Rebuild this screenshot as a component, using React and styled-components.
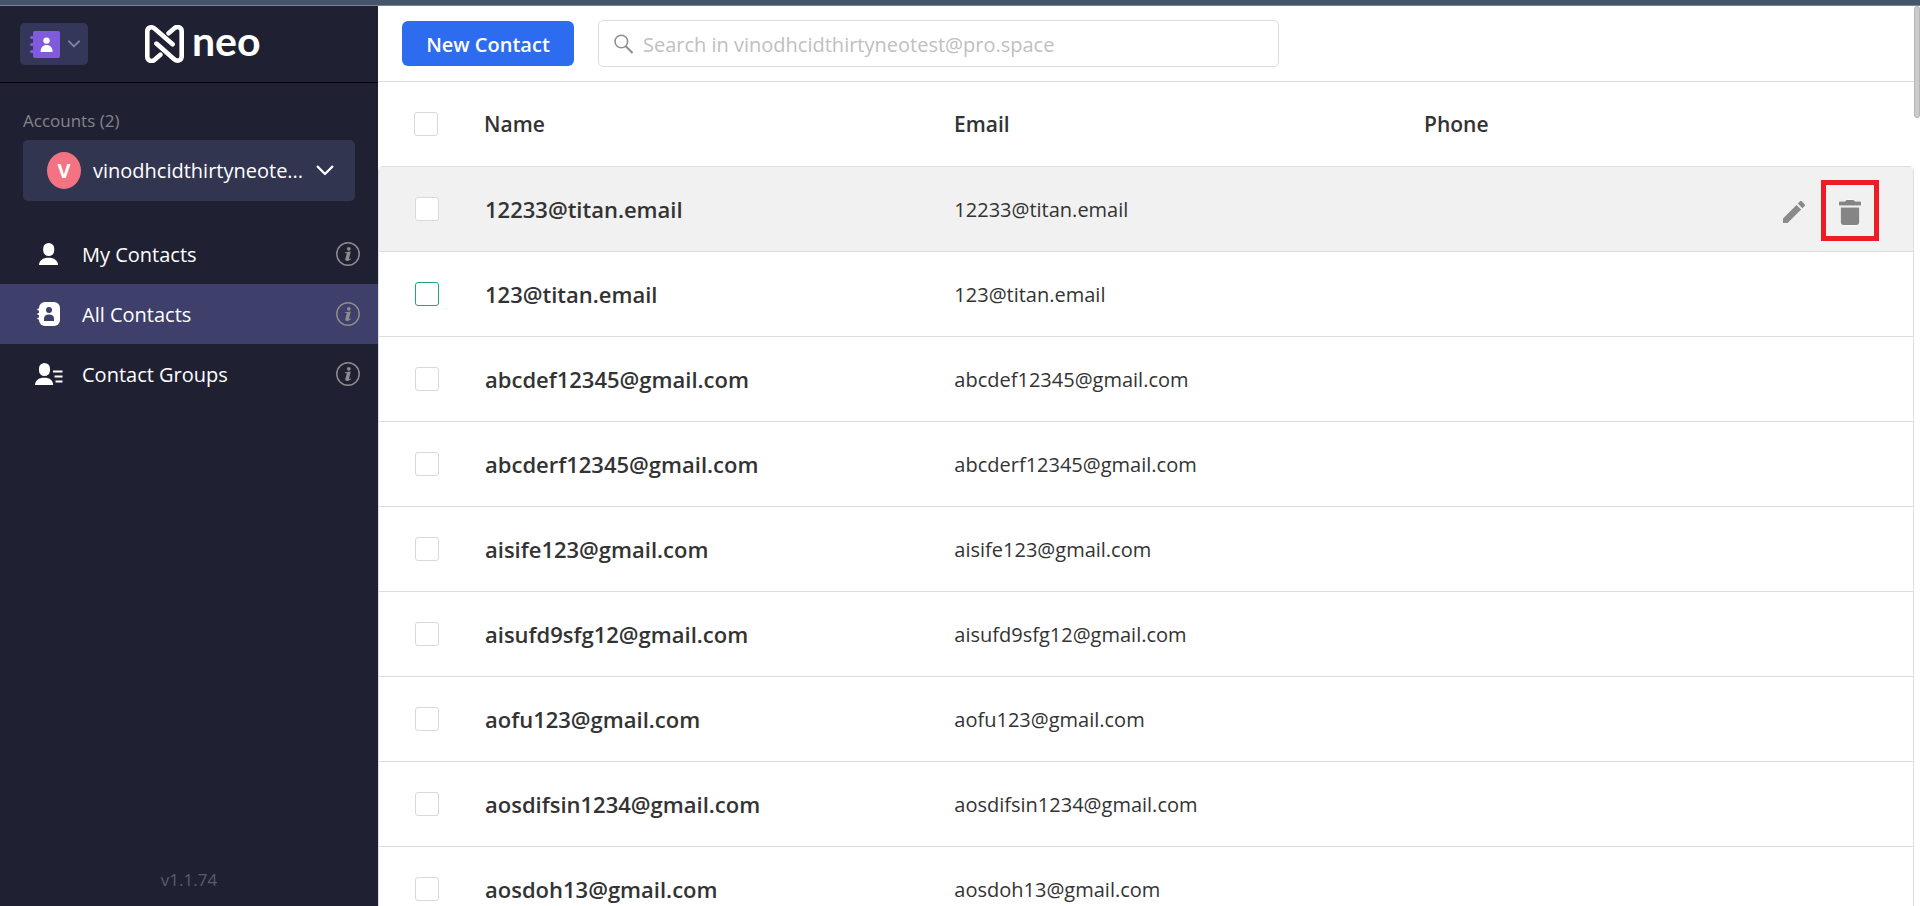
import { useState } from 'react';
import styled, { createGlobalStyle } from 'styled-components';

const GlobalStyle = createGlobalStyle`
  * {
    box-sizing: border-box;
  }

  body {
    margin: 0;
    background: #ffffff;
    color: #333333;
    font-family: "Segoe UI", "Open Sans", "Noto Sans", sans-serif;
    font-size: 20px;
  }

  button,
  input {
    font-family: inherit;
  }

  svg {
    display: block;
    flex: none;
  }
`;

const Page = styled.div`
  display: flex;
  flex-direction: column;
  height: 100vh;
  overflow: hidden;
`;

const TopStrip = styled.div`
  flex: none;
  height: 6px;
  background: #44546a;
  border-bottom: 1px solid #76839a;
`;

const Layout = styled.div`
  display: flex;
  flex: 1;
  min-height: 0;
`;

const Sidebar = styled.aside`
  display: flex;
  flex-direction: column;
  flex: none;
  width: 378px;
  background: #1f2133;
  color: #ffffff;
`;

const SidebarHeader = styled.div`
  display: flex;
  align-items: center;
  gap: 57px;
  height: 77px;
  padding: 0 20px;
  border-bottom: 1px solid #000000;
`;

const AppSwitcher = styled.button`
  display: flex;
  align-items: center;
  gap: 8px;
  width: 68px;
  height: 42px;
  padding: 0 0 0 10px;
  border: none;
  border-radius: 5px;
  background: #34375a;
  cursor: pointer;
`;

const Logo = styled.a`
  display: flex;
  align-items: center;
  gap: 8px;
  height: 40px;
  color: #ffffff;
  font-family: Lato, sans-serif;
  font-size: 41px;
  font-weight: 700;
  line-height: 32px;
  text-decoration: none;
`;

const LogoText = styled.span`
  padding-bottom: 6px;
`;

const AccountsLabel = styled.div`
  padding: 26px 23px 7px;
  color: #84858a;
  font-size: 17px;
  line-height: 24px;
`;

const AccountPicker = styled.button`
  display: flex;
  align-items: center;
  justify-content: space-between;
  gap: 12px;
  height: 61px;
  margin: 0 23px 23px;
  padding: 0 21px 0 24px;
  border: none;
  border-radius: 5px;
  background: #31354f;
  color: #ffffff;
  font-size: 20px;
  cursor: pointer;
`;

const Avatar = styled.span`
  flex: none;
  width: 34px;
  height: 37px;
  border-radius: 50%;
  background: #f47383;
  font-size: 20px;
  font-weight: 700;
  line-height: 37px;
  text-align: center;
`;

const AccountName = styled.span`
  flex: 1;
  line-height: 28px;
  text-align: left;
  white-space: nowrap;
`;

const NavItem = styled.div`
  display: flex;
  align-items: center;
  height: 60px;
  padding-right: 18px;
  background: ${(props) => (props.$active ? '#3e3f6b' : 'transparent')};
`;

const NavLink = styled.a`
  display: flex;
  align-items: center;
  flex: 1;
  height: 60px;
  color: #ffffff;
  font-size: 20px;
  text-decoration: none;
`;

const NavIcon = styled.span`
  display: flex;
  width: 82px;
  padding-left: 34px;
`;

const InfoButton = styled.button`
  padding: 0;
  border: none;
  background: none;
  cursor: pointer;
`;

const Version = styled.div`
  margin-top: auto;
  padding-bottom: 14px;
  color: #5a5c66;
  font-size: 17px;
  line-height: 24px;
  text-align: center;
`;

const Main = styled.main`
  flex: 1;
  min-width: 0;
`;

const Toolbar = styled.div`
  display: flex;
  align-items: center;
  gap: 24px;
  height: 76px;
  padding: 0 24px;
  border-bottom: 1px solid #dddddd;
`;

const NewContactButton = styled.button`
  flex: none;
  width: 172px;
  height: 45px;
  padding: 2px 0 0;
  border: none;
  border-radius: 6px;
  background: #2d6cee;
  color: #ffffff;
  font-size: 20px;
  font-weight: 600;
  cursor: pointer;
`;

const SearchBox = styled.label`
  display: flex;
  align-items: center;
  gap: 10px;
  flex: 0 1 681px;
  height: 47px;
  padding: 0 15px;
  border: 1px solid #dddddd;
  border-radius: 5px;
`;

const SearchInput = styled.input`
  flex: 1;
  min-width: 0;
  padding: 2px 0 0;
  border: none;
  outline: none;
  background: none;
  color: #333333;
  font-size: 20px;

  &::placeholder {
    color: #c0c0c0;
    opacity: 1;
  }
`;

const Table = styled.table`
  display: block;
`;

const TableHead = styled.thead`
  display: block;
`;

const TableBody = styled.tbody`
  display: block;
  border: 1px solid #dddddd;
  border-radius: 5px 5px 0 0;
`;

const Row = styled.tr`
  display: grid;
  grid-template-columns: 106px 1fr 1fr 1fr;
  align-items: center;
  height: ${(props) => (props.$head ? '84px' : '85px')};
  padding-right: 20px;
  border-bottom: ${(props) => (props.$head ? 'none' : '1px solid #dddddd')};
  background: ${(props) => (props.$hovered ? '#f1f1f1' : 'transparent')};
`;

const HeadCell = styled.th`
  padding: 0;
  font-size: 21px;
  font-weight: 600;
  line-height: 30px;
  text-align: left;
`;

const CheckCell = styled.td`
  display: flex;
  padding: 0 0 0 36px;
`;

const NameCell = styled.td`
  padding: 0;
  font-size: 22px;
  font-weight: 600;
  line-height: 30px;
`;

const Cell = styled.td`
  padding: 2px 0 0;
  font-size: 20px;
  line-height: 30px;
`;

const PhoneCell = styled.td`
  display: flex;
  align-items: center;
  justify-content: flex-end;
  gap: 4px;
  padding: 2px 14px 0 0;
`;

const Checkbox = styled.input`
  appearance: none;
  width: 24px;
  height: 24px;
  margin: 0;
  border: 1px solid ${(props) => (props.$focused ? '#1fa67a' : '#d9d9d9')};
  border-radius: 3px;
  background: #ffffff;
  cursor: pointer;

  &:checked {
    background: #1fa67a;
  }
`;

const IconButton = styled.button`
  display: flex;
  padding: 4px 12px 0;
  border: none;
  background: none;
  cursor: pointer;
`;

const DeleteButton = styled(IconButton)`
  align-items: center;
  justify-content: center;
  width: 58px;
  height: 61px;
  padding: 4px 0 0;
  border: 5px solid #ee1c25;
`;

const Scrollbar = styled.div`
  flex: none;
  width: 6px;
`;

const ScrollThumb = styled.div`
  height: 112px;
  border: 1px solid #b5b5b5;
  border-radius: 3px;
  background: #cccccc;
`;

const AddressBookIcon = () => (
  <svg width="30" height="27" viewBox="0 0 30 27">
    <rect x="3" width="27" height="27" rx="2" fill="#805bdb" />
    <path d="M1.5 6.5H6M1.5 13.5H6M1.5 20.5H6" stroke="#805bdb" strokeWidth="3" strokeLinecap="round" />
    <circle cx="16.5" cy="9.6" r="3.2" fill="#ffffff" />
    <path d="M10.6 21c0-4.600 2.500-7 5.900-7s6.100 2.400 6.100 7z" fill="#ffffff" />
  </svg>
);

const Chevron = ({ width, height, color, thickness }) => (
  <svg width={width} height={height} viewBox="0 0 16 10">
    <path d="M1.300 1.500 8 8.200l6.700-6.700" fill="none" stroke={color} strokeWidth={thickness} strokeLinecap="round" strokeLinejoin="round" />
  </svg>
);

const NeoMark = () => (
  <svg width="39" height="38" viewBox="0 0 39 38" fill="none" stroke="#ffffff" strokeWidth="4.600" strokeLinecap="round" strokeLinejoin="round">
    <path d="M27.600 19.200 9.800 3.700C6.600 1 2.300 2.300 2.300 6.600v25c0 4 4.200 5.700 7.300 3.100l5.800-5" />
    <path d="M11.400 18.600l17.800 15.600c3.200 2.700 7.500 1.400 7.500-2.900v-25c0-4-4.200-5.700-7.300-3.100l-5.800 5" />
  </svg>
);

const PersonIcon = () => (
  <svg width="28" height="26" viewBox="0 0 28 26" fill="#ffffff">
    <rect x="9.200" y="2" width="11" height="13" rx="5.500" />
    <path d="M5 24c.2-4.500 3.800-7.200 9.500-7.200S23.800 19.500 24 24z" />
  </svg>
);

const ContactBookIcon = () => (
  <svg width="28" height="26" viewBox="0 0 28 26">
    <rect x="5" y="1" width="21" height="24" rx="6" fill="#ffffff" />
    <path d="M4.300 8.500H8M4.300 13H8M4.300 17.500H8" stroke="#ffffff" strokeWidth="2" strokeLinecap="round" />
    <circle cx="15" cy="9" r="3" fill="#3e3f6b" />
    <path d="M10 19.500v-2c0-2.600 2-4 5-4s5 1.400 5 4v2q0 .5-.5.500h-9q-.5 0-.5-.5z" fill="#3e3f6b" />
  </svg>
);

const GroupIcon = () => (
  <svg width="30" height="26" viewBox="0 0 30 26" fill="#ffffff">
    <rect x="5" y="2" width="11" height="13" rx="5.500" />
    <path d="M1 24c.2-4.500 3.600-7.200 9.300-7.200S19 19.500 19.200 24z" />
    <path d="M19 10.500h9.500M20.500 15.500h8M21.500 20.500h7" stroke="#ffffff" strokeWidth="1.800" />
  </svg>
);

const InfoIcon = () => (
  <svg width="24" height="24" viewBox="0 0 24 24" fill="#8c8c8c">
    <circle cx="12" cy="12" r="11.200" fill="none" stroke="#8c8c8c" strokeWidth="1.500" />
    <circle cx="12.800" cy="6.800" r="1.900" />
    <path d="M9 10.200 14.800 9.600 13 16.600c-.1.600.5.600 1.700-.4l.3.700c-1.500 1.500-2.800 2-4 2-1.400 0-2-.8-1.700-2l1.400-5.100c.1-.6-.4-.7-1.700-.7z" />
  </svg>
);

const SearchIcon = () => (
  <svg width="19" height="20" viewBox="0 0 19 20" fill="none" stroke="#8f8f8f" strokeWidth="1.600">
    <circle cx="7.300" cy="7.500" r="6.300" />
    <path d="M11.800 12.200 18.500 19" strokeWidth="2" />
  </svg>
);

const PencilIcon = () => (
  <svg width="22" height="22" viewBox="3 3 18 18" fill="#8a8a8a">
    <path d="M3 17.250V21h3.750L17.810 9.940l-3.750-3.750L3 17.250zM20.710 7.040c.39-.39.39-1.020 0-1.410l-2.340-2.340c-.39-.39-1.020-.39-1.410 0l-1.830 1.830 3.750 3.750 1.830-1.830z" />
  </svg>
);

const TrashIcon = () => (
  <svg width="24" height="27" viewBox="0 0 24 27" fill="#858585" stroke="#ffffff" strokeWidth="1" paintOrder="stroke">
    <path d="M1 3.200Q1 2.500 1.700 2.500H7L8.500 1h7L17 2.500h5.300Q23 2.500 23 3.200V6.500H1z" />
    <path d="M2.800 8.500h18.400V23q0 3-3 3H5.800q-3 0-3-3z" />
  </svg>
);

const navItems = [
  { label: 'My Contacts', icon: <PersonIcon /> },
  { label: 'All Contacts', icon: <ContactBookIcon /> },
  { label: 'Contact Groups', icon: <GroupIcon /> },
];

const contacts = [
  '12233@titan.email',
  '123@titan.email',
  'abcdef12345@gmail.com',
  'abcderf12345@gmail.com',
  'aisife123@gmail.com',
  'aisufd9sfg12@gmail.com',
  'aofu123@gmail.com',
  'aosdifsin1234@gmail.com',
  'aosdoh13@gmail.com',
];

const account = 'vinodhcidthirtyneotest@pro.space';

const shorten = (text, max) => (text.length > max ? `${text.slice(0, max)}...` : text);

function App() {
  const [active, setActive] = useState('All Contacts');
  const [query, setQuery] = useState('');

  return (
    <Page>
      <GlobalStyle />
      <TopStrip />
      <Layout>
        <Sidebar>
          <SidebarHeader>
            <AppSwitcher type="button" aria-label="Switch app">
              <AddressBookIcon />
              <Chevron width={12} height={8} color="#8082ac" thickness={2.6} />
            </AppSwitcher>
            <Logo href="#home">
              <NeoMark />
              <LogoText>neo</LogoText>
            </Logo>
          </SidebarHeader>
          <AccountsLabel>Accounts (2)</AccountsLabel>
          <AccountPicker type="button">
            <Avatar>V</Avatar>
            <AccountName>{shorten(account, 20)}</AccountName>
            <Chevron width={18} height={11} color="#ffffff" thickness={2} />
          </AccountPicker>
          <nav>
            {navItems.map((item) => (
              <NavItem key={item.label} $active={item.label === active}>
                <NavLink href="#contacts" onClick={() => setActive(item.label)}>
                  <NavIcon>{item.icon}</NavIcon>
                  {item.label}
                </NavLink>
                <InfoButton type="button" aria-label={`About ${item.label}`}>
                  <InfoIcon />
                </InfoButton>
              </NavItem>
            ))}
          </nav>
          <Version>v1.1.74</Version>
        </Sidebar>
        <Main>
          <Toolbar>
            <NewContactButton type="button">New Contact</NewContactButton>
            <SearchBox>
              <SearchIcon />
              <SearchInput
                type="text"
                aria-label="Search contacts"
                placeholder={`Search in ${account}`}
                value={query}
                onChange={(e) => setQuery(e.target.value)}
              />
            </SearchBox>
          </Toolbar>
          <Table>
            <TableHead>
              <Row $head>
                <CheckCell>
                  <Checkbox type="checkbox" aria-label="Select all contacts" />
                </CheckCell>
                <HeadCell>Name</HeadCell>
                <HeadCell>Email</HeadCell>
                <HeadCell>Phone</HeadCell>
              </Row>
            </TableHead>
            <TableBody>
              {contacts.map((contact, i) => (
                <Row key={contact} $hovered={i === 0}>
                  <CheckCell>
                    <Checkbox type="checkbox" aria-label={`Select ${contact}`} $focused={i === 1} />
                  </CheckCell>
                  <NameCell>{contact}</NameCell>
                  <Cell>{contact}</Cell>
                  <PhoneCell>
                    {i === 0 && (
                      <>
                        <IconButton type="button" aria-label="Edit contact">
                          <PencilIcon />
                        </IconButton>
                        <DeleteButton type="button" aria-label="Delete contact">
                          <TrashIcon />
                        </DeleteButton>
                      </>
                    )}
                  </PhoneCell>
                </Row>
              ))}
            </TableBody>
          </Table>
        </Main>
        <Scrollbar>
          <ScrollThumb />
        </Scrollbar>
      </Layout>
    </Page>
  );
}

export default App;
